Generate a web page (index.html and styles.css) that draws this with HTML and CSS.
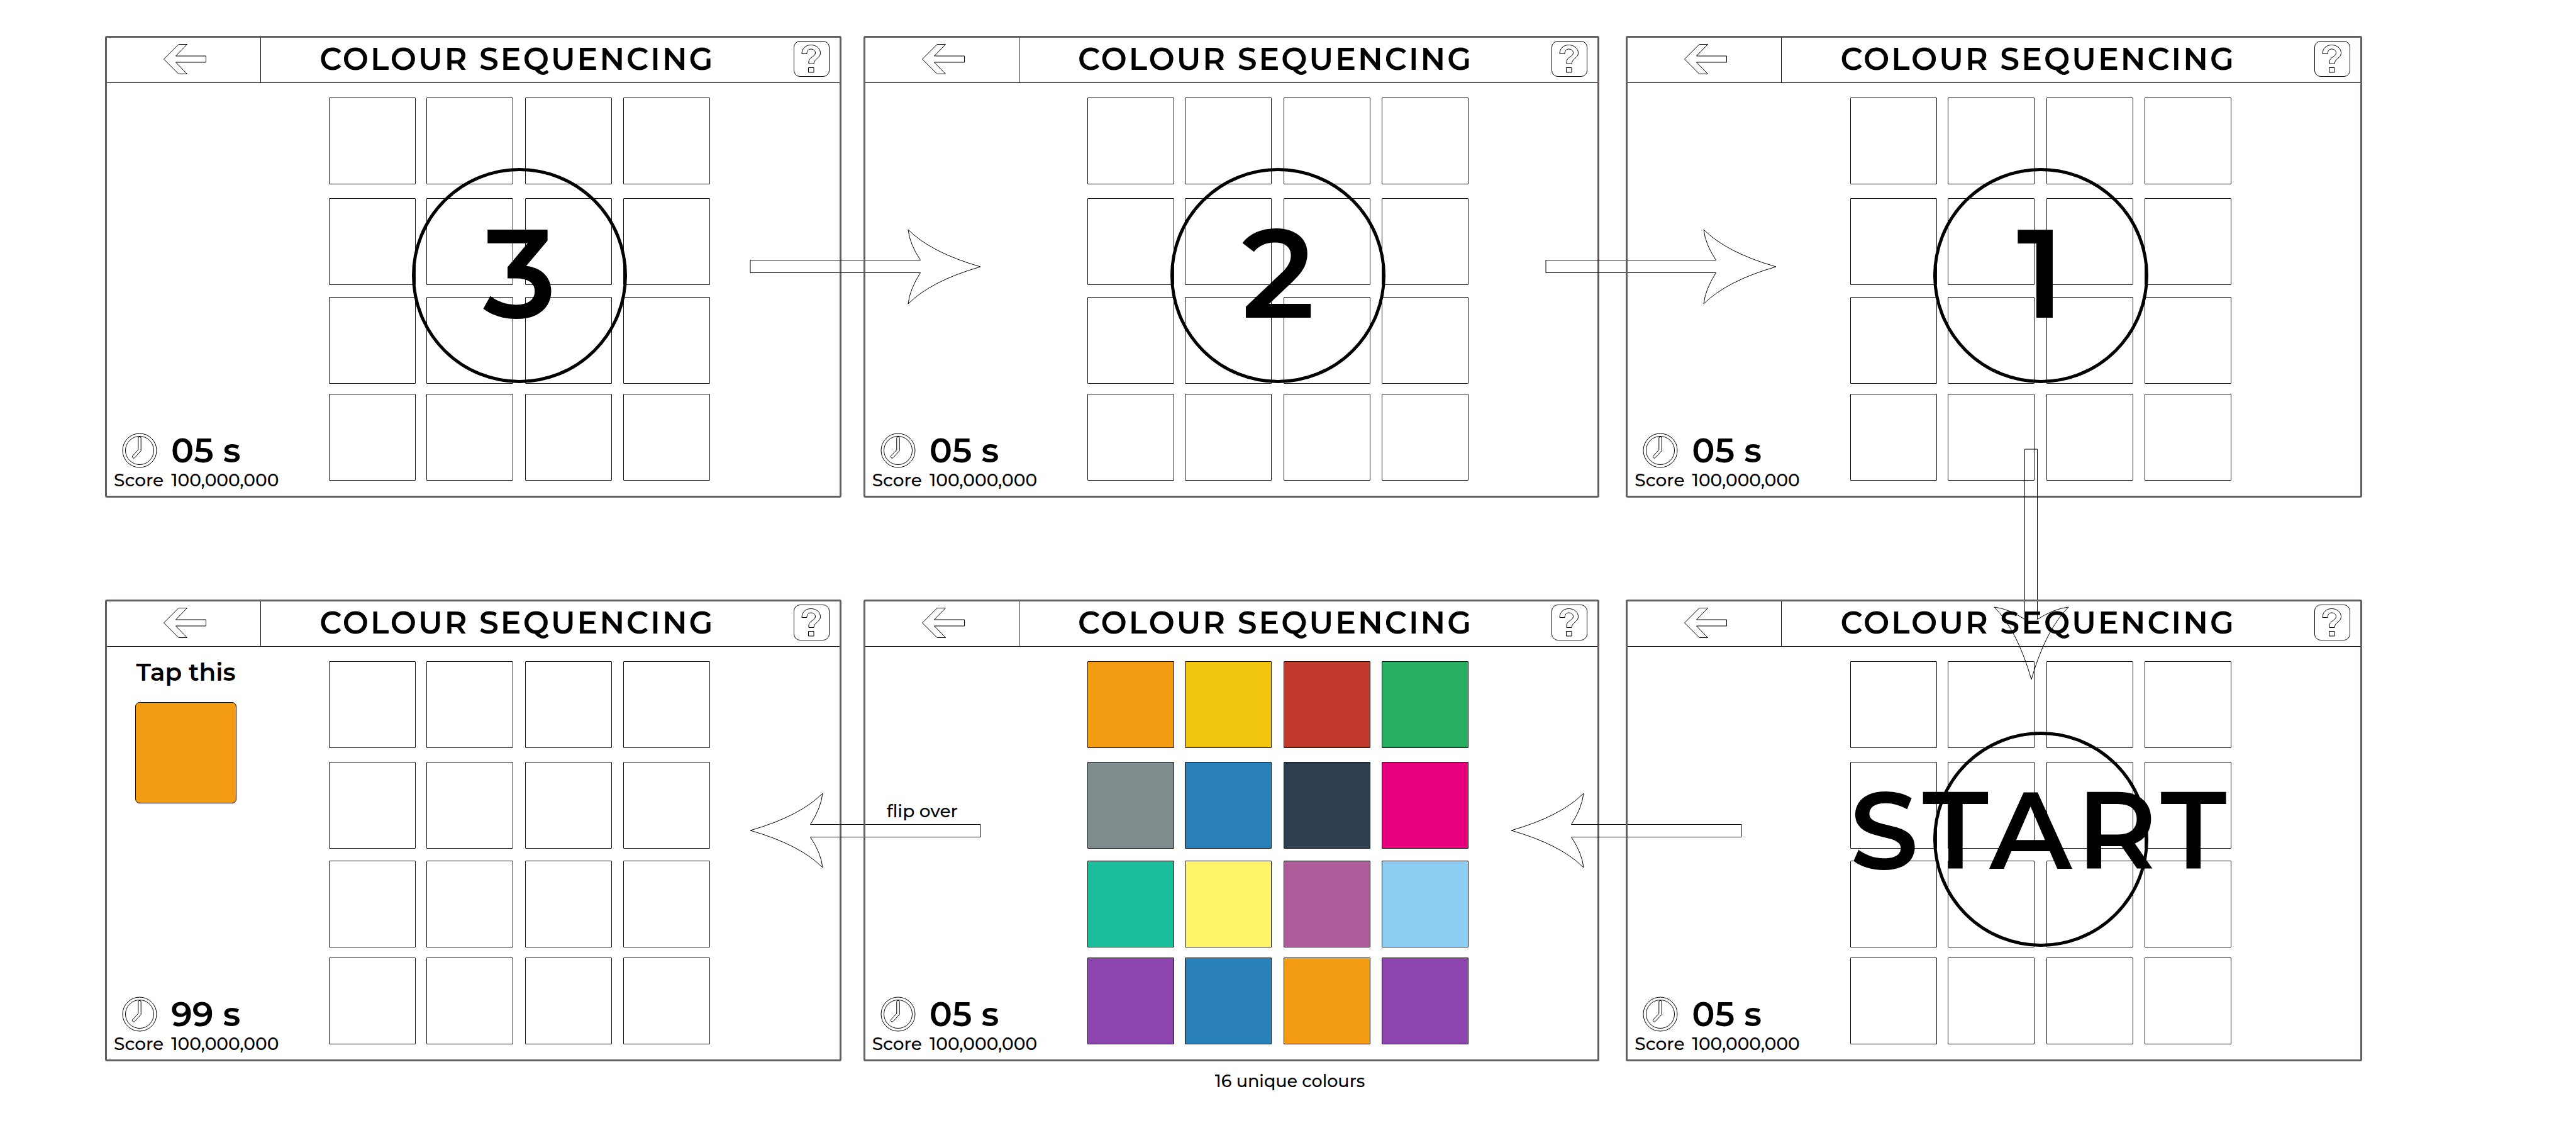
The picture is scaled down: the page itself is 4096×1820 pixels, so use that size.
FILE: index.html
```html
<!DOCTYPE html>
<html lang="en">
<head>
<meta charset="utf-8">
<title>Colour Sequencing – screen flow</title>
<link rel="stylesheet" href="styles.css">
</head>
<body>
<svg class="defs" aria-hidden="true">
  <symbol id="back" viewBox="0 0 68 48"><path d="M.5 24 24 .5h13.500L19.500 19H67.500V29H19.500L37.500 47.500H24Z"/></symbol>
  <symbol id="help" viewBox="0 0 57 57"><path d="M13 20.500C13 12 19 6.500 27.500 6.500S42.500 12 42.500 19.500C42.500 27 32 29 32 36.500H24V33C24 26 34.500 25 34.500 19C34.500 15.500 31.500 13 27.500 13S21 16 21 20.500ZM23.500 42.500h8.500v7.500h-8.500Z"/></symbol>
  <symbol id="clock" viewBox="0 0 56 56"><circle cx="28" cy="28" r="27"/><circle cx="28" cy="28" r="22.500"/><path d="M25.800 8.500a2.200 2.200 0 0 1 4.400 0V28.500L20.400 39.300a2.200 2.200 0 0 1-3.600-2.600L25.800 27Z"/></symbol>
  <symbol id="arrow" viewBox="0 0 368 120"><path d="M1 49.500H271.500Q254.500 24 252 1 288.500 37.500 367 60 288.500 82.500 252 119 254.500 96 271.500 69.500H1Z"/></symbol>
</svg>
<main class="flow">
  <div class="row">
    <figure class="step">
      <section class="screen">
        <header class="bar">
          <button class="back" aria-label="Back"><svg><use href="#back"/></svg></button>
          <h2 class="title">COLOUR SEQUENCING</h2>
          <button class="help" aria-label="Help"><svg><use href="#help"/></svg></button>
        </header>
        <div class="play">
          <aside class="side">
            <div class="status">
              <p class="timer"><svg><use href="#clock"/></svg>05 s</p>
              <p class="score"><span>Score</span><span>100,000,000</span></p>
            </div>
          </aside>
          <div class="board">
            <button class="tile" aria-label="Tile 1"></button><button class="tile" aria-label="Tile 2"></button><button class="tile" aria-label="Tile 3"></button><button class="tile" aria-label="Tile 4"></button>
            <button class="tile" aria-label="Tile 5"></button><button class="tile" aria-label="Tile 6"></button><button class="tile" aria-label="Tile 7"></button><button class="tile" aria-label="Tile 8"></button>
            <button class="tile" aria-label="Tile 9"></button><button class="tile" aria-label="Tile 10"></button><button class="tile" aria-label="Tile 11"></button><button class="tile" aria-label="Tile 12"></button>
            <button class="tile" aria-label="Tile 13"></button><button class="tile" aria-label="Tile 14"></button><button class="tile" aria-label="Tile 15"></button><button class="tile" aria-label="Tile 16"></button>
            <div class="count">3</div>
          </div>
        </div>
        <svg class="link link-a"><use href="#arrow"/></svg>
      </section>
    </figure>

    <figure class="step">
      <section class="screen">
        <header class="bar">
          <button class="back" aria-label="Back"><svg><use href="#back"/></svg></button>
          <h2 class="title">COLOUR SEQUENCING</h2>
          <button class="help" aria-label="Help"><svg><use href="#help"/></svg></button>
        </header>
        <div class="play">
          <aside class="side">
            <div class="status">
              <p class="timer"><svg><use href="#clock"/></svg>05 s</p>
              <p class="score"><span>Score</span><span>100,000,000</span></p>
            </div>
          </aside>
          <div class="board">
            <button class="tile" aria-label="Tile 1"></button><button class="tile" aria-label="Tile 2"></button><button class="tile" aria-label="Tile 3"></button><button class="tile" aria-label="Tile 4"></button>
            <button class="tile" aria-label="Tile 5"></button><button class="tile" aria-label="Tile 6"></button><button class="tile" aria-label="Tile 7"></button><button class="tile" aria-label="Tile 8"></button>
            <button class="tile" aria-label="Tile 9"></button><button class="tile" aria-label="Tile 10"></button><button class="tile" aria-label="Tile 11"></button><button class="tile" aria-label="Tile 12"></button>
            <button class="tile" aria-label="Tile 13"></button><button class="tile" aria-label="Tile 14"></button><button class="tile" aria-label="Tile 15"></button><button class="tile" aria-label="Tile 16"></button>
            <div class="count">2</div>
          </div>
        </div>
        <svg class="link link-b"><use href="#arrow"/></svg>
      </section>
    </figure>

    <figure class="step">
      <section class="screen">
        <header class="bar">
          <button class="back" aria-label="Back"><svg><use href="#back"/></svg></button>
          <h2 class="title">COLOUR SEQUENCING</h2>
          <button class="help" aria-label="Help"><svg><use href="#help"/></svg></button>
        </header>
        <div class="play">
          <aside class="side">
            <div class="status">
              <p class="timer"><svg><use href="#clock"/></svg>05 s</p>
              <p class="score"><span>Score</span><span>100,000,000</span></p>
            </div>
          </aside>
          <div class="board">
            <button class="tile" aria-label="Tile 1"></button><button class="tile" aria-label="Tile 2"></button><button class="tile" aria-label="Tile 3"></button><button class="tile" aria-label="Tile 4"></button>
            <button class="tile" aria-label="Tile 5"></button><button class="tile" aria-label="Tile 6"></button><button class="tile" aria-label="Tile 7"></button><button class="tile" aria-label="Tile 8"></button>
            <button class="tile" aria-label="Tile 9"></button><button class="tile" aria-label="Tile 10"></button><button class="tile" aria-label="Tile 11"></button><button class="tile" aria-label="Tile 12"></button>
            <button class="tile" aria-label="Tile 13"></button><button class="tile" aria-label="Tile 14"></button><button class="tile" aria-label="Tile 15"></button><button class="tile" aria-label="Tile 16"></button>
            <div class="count">1</div>
            <svg class="link-down" viewBox="0 0 120 368"><path d="M49.500 1V271.500Q24 254.500 1 252 37.500 288.500 60 367 82.500 288.500 119 252 96 254.500 69.500 271.500V1Z"/></svg>
          </div>
        </div>
      </section>
    </figure>
  </div>

  <div class="row">
    <figure class="step">
      <section class="screen">
        <header class="bar">
          <button class="back" aria-label="Back"><svg><use href="#back"/></svg></button>
          <h2 class="title">COLOUR SEQUENCING</h2>
          <button class="help" aria-label="Help"><svg><use href="#help"/></svg></button>
        </header>
        <div class="play">
          <aside class="side">
            <div class="target">
              <p class="prompt">Tap this</p>
              <div class="swatch orange"></div>
            </div>
            <div class="status">
              <p class="timer"><svg><use href="#clock"/></svg>99 s</p>
              <p class="score"><span>Score</span><span>100,000,000</span></p>
            </div>
          </aside>
          <div class="board">
            <button class="tile" aria-label="Tile 1"></button><button class="tile" aria-label="Tile 2"></button><button class="tile" aria-label="Tile 3"></button><button class="tile" aria-label="Tile 4"></button>
            <button class="tile" aria-label="Tile 5"></button><button class="tile" aria-label="Tile 6"></button><button class="tile" aria-label="Tile 7"></button><button class="tile" aria-label="Tile 8"></button>
            <button class="tile" aria-label="Tile 9"></button><button class="tile" aria-label="Tile 10"></button><button class="tile" aria-label="Tile 11"></button><button class="tile" aria-label="Tile 12"></button>
            <button class="tile" aria-label="Tile 13"></button><button class="tile" aria-label="Tile 14"></button><button class="tile" aria-label="Tile 15"></button><button class="tile" aria-label="Tile 16"></button>
          </div>
        </div>
        <svg class="link link-a reverse"><use href="#arrow"/></svg>
        <p class="note">flip over</p>
      </section>
    </figure>

    <figure class="step">
      <section class="screen">
        <header class="bar">
          <button class="back" aria-label="Back"><svg><use href="#back"/></svg></button>
          <h2 class="title">COLOUR SEQUENCING</h2>
          <button class="help" aria-label="Help"><svg><use href="#help"/></svg></button>
        </header>
        <div class="play">
          <aside class="side">
            <div class="status">
              <p class="timer"><svg><use href="#clock"/></svg>05 s</p>
              <p class="score"><span>Score</span><span>100,000,000</span></p>
            </div>
          </aside>
          <div class="board">
            <button class="tile orange" aria-label="Orange"></button><button class="tile yellow" aria-label="Yellow"></button><button class="tile red" aria-label="Red"></button><button class="tile green" aria-label="Green"></button>
            <button class="tile grey" aria-label="Grey"></button><button class="tile blue" aria-label="Blue"></button><button class="tile navy" aria-label="Navy"></button><button class="tile pink" aria-label="Pink"></button>
            <button class="tile teal" aria-label="Teal"></button><button class="tile lemon" aria-label="Lemon"></button><button class="tile mauve" aria-label="Mauve"></button><button class="tile sky" aria-label="Sky"></button>
            <button class="tile purple" aria-label="Purple"></button><button class="tile blue" aria-label="Blue"></button><button class="tile orange" aria-label="Orange"></button><button class="tile purple" aria-label="Purple"></button>
          </div>
        </div>
        <svg class="link link-c reverse"><use href="#arrow"/></svg>
      </section>
      <figcaption class="caption">16 unique colours</figcaption>
    </figure>

    <figure class="step">
      <section class="screen">
        <header class="bar">
          <button class="back" aria-label="Back"><svg><use href="#back"/></svg></button>
          <h2 class="title">COLOUR SEQUENCING</h2>
          <button class="help" aria-label="Help"><svg><use href="#help"/></svg></button>
        </header>
        <div class="play">
          <aside class="side">
            <div class="status">
              <p class="timer"><svg><use href="#clock"/></svg>05 s</p>
              <p class="score"><span>Score</span><span>100,000,000</span></p>
            </div>
          </aside>
          <div class="board">
            <button class="tile" aria-label="Tile 1"></button><button class="tile" aria-label="Tile 2"></button><button class="tile" aria-label="Tile 3"></button><button class="tile" aria-label="Tile 4"></button>
            <button class="tile" aria-label="Tile 5"></button><button class="tile" aria-label="Tile 6"></button><button class="tile" aria-label="Tile 7"></button><button class="tile" aria-label="Tile 8"></button>
            <button class="tile" aria-label="Tile 9"></button><button class="tile" aria-label="Tile 10"></button><button class="tile" aria-label="Tile 11"></button><button class="tile" aria-label="Tile 12"></button>
            <button class="tile" aria-label="Tile 13"></button><button class="tile" aria-label="Tile 14"></button><button class="tile" aria-label="Tile 15"></button><button class="tile" aria-label="Tile 16"></button>
            <div class="count start">START</div>
          </div>
        </div>
      </section>
    </figure>
  </div>
</main>
</body>
</html>
```
FILE: styles.css
```css
* { box-sizing: border-box; }

body {
  margin: 0;
  background: #fff;
  color: #000;
  font-family: Montserrat, Inter, "Liberation Sans", sans-serif;
  font-weight: 500;
}

h2, p, figure { margin: 0; }

button {
  margin: 0;
  padding: 0;
  border: 0;
  background: none;
  font: inherit;
}

svg { display: block; fill: none; stroke: #000; stroke-width: 1px; }

.defs { position: absolute; width: 0; height: 0; }

/* flow of screens */
.flow {
  display: flex;
  flex-direction: column;
  gap: 162px;
  padding: 57px 340px 0 167px;
}

.row { display: flex; align-items: flex-start; gap: 35px; }
.step { flex: 1; }
.step:last-child { margin-left: 7px; }

.screen {
  position: relative;
  border: 3px solid #655e60;
  border-radius: 3px;
}

/* title bar */
.bar {
  display: grid;
  grid-template-columns: 245px 1fr 73px;
  height: 72px;
  border-bottom: 1px solid #000;
}

.back {
  display: flex;
  align-items: center;
  justify-content: center;
  padding: 0 0 3px 4px;
  border-right: 1px solid #000;
}
.back svg { width: 68px; height: 48px; }

.title {
  padding: 0 32px 3px 0;
  font-size: 49px;
  font-weight: 600;
  line-height: 68px;
  letter-spacing: 3px;
  text-align: center;
  white-space: nowrap;
}

.help {
  width: 57px;
  height: 57px;
  margin-top: 5px;
  border: 1px solid #000;
  border-radius: 10px;
}
.help svg { width: 57px; height: 57px; margin: -1px; }

/* play area */
.play { display: grid; grid-template-columns: 353fr 606px 205fr; }

.side { display: flex; flex-direction: column; }

.target { width: 161px; margin: 16px 0 0 45px; }
.prompt {
  margin-bottom: 24px;
  font-size: 39px;
  font-weight: 600;
  line-height: 48px;
  text-align: center;
  white-space: nowrap;
}
.swatch { height: 161px; border: 1px solid #000; border-radius: 7px; }

.status { margin-top: auto; padding: 0 0 9px 11px; }
.timer {
  display: flex;
  align-items: center;
  gap: 22px;
  margin: 0 0 3px 13px;
  font-size: 54px;
  font-weight: 600;
  line-height: 56px;
}
.timer svg { width: 56px; height: 56px; }
.score {
  display: flex;
  gap: 12px;
  font-size: 28px;
  line-height: 32px;
}

.board {
  position: relative;
  display: grid;
  grid-template-columns: 155px 157px 156px 138px;
  grid-template-rows: 160px 157px 154px 138px;
  margin: 23px 0 24px;
}
.tile {
  width: 138px;
  height: 138px;
  border: 1px solid #111;
  border-radius: 1px;
}

/* countdown */
.count {
  position: absolute;
  top: 112px;
  left: calc(50% - 171px);
  display: flex;
  align-items: center;
  justify-content: center;
  width: 342px;
  height: 342px;
  padding-bottom: 10px;
  border: 5px solid #000;
  border-radius: 50%;
  font-size: 200px;
  font-weight: 600;
  line-height: 1;
}
.start {
  padding-bottom: 30px;
  font-size: 174px;
  letter-spacing: 8px;
}

/* connectors */
.link { position: absolute; top: 304px; width: 368px; height: 120px; }
.link-a { right: -225px; }
.link-b { right: -285px; }
.link-c { right: -230px; }
.reverse { transform: rotate(180deg); }
.link-down { position: absolute; top: 558px; left: 228px; width: 120px; height: 368px; }
.note {
  position: absolute;
  top: 317px;
  left: calc(100% + 75px);
  font-size: 28px;
  line-height: 32px;
  white-space: nowrap;
}
.caption {
  padding: 16px 0 0 186px;
  font-size: 27px;
  line-height: 32px;
  text-align: center;
}

/* palette */
.orange { background: #f39c12; }
.yellow { background: #f1c40f; }
.red { background: #c0392b; }
.green { background: #27ae60; }
.grey { background: #7f8c8d; }
.blue { background: #2980b9; }
.navy { background: #2c3e50; }
.pink { background: #e6007e; }
.teal { background: #1abc9c; }
.lemon { background: #fff568; }
.mauve { background: #af5c9b; }
.sky { background: #8dcdf4; }
.purple { background: #8e44ad; }
```
